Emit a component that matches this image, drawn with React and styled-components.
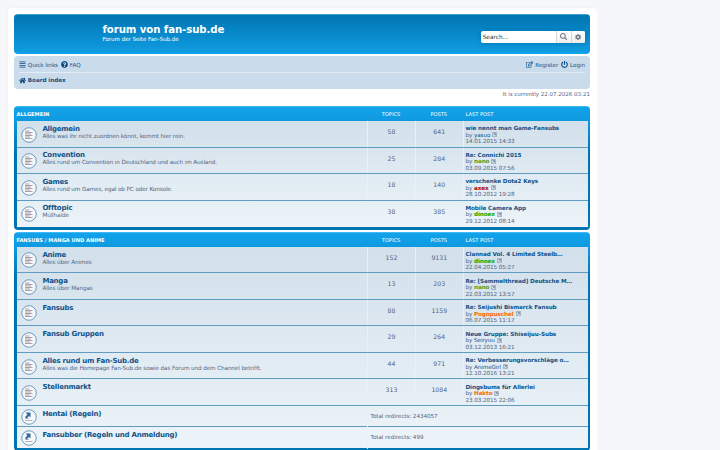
import React from "react";
import styled, { createGlobalStyle } from "styled-components";
import { FaHome, FaSearch, FaCog, FaAlignJustify, FaQuestionCircle, FaPowerOff, FaRegEdit } from "react-icons/fa";

const Global = createGlobalStyle`
  * { box-sizing: border-box; }
  html, body { margin: 0; background: #f5f7fa; }
  body { height: 450px; overflow: hidden; font-family: "DejaVu Sans", sans-serif; color: #536482; }
  h1, h2, p { margin: 0; }
`;
const Wrap = styled.main`
  width: 590px; height: 460px; margin: 7px 0 0 7px; padding: 6px 7px 0 6px;
  background: #fff; border: 1px solid #f0f3f7; border-width: 1px 0 0 1px; border-radius: 4px;
`;
const Banner = styled.header`
  height: 40px; border-radius: 4px; display: flex; justify-content: space-between;
  background: linear-gradient(#6aceff 0, #0076b1 1px, #0f9ae0 92%, #12a3eb 100%);
  color: #fff; padding: 0 5px 0 88.5px;
`;
const SiteTitle = styled.h1`font-size: 10.2px; letter-spacing: -.1px; line-height: 12px; margin-top: 10.4px; white-space: nowrap;`;
const Tagline = styled.p`font-size: 5.6px; letter-spacing: -.06px; line-height: 6.6px; white-space: nowrap;`;
const Search = styled.form`
  display: flex; width: 104px; height: 12px; margin-top: 17px; border-radius: 2px; overflow: hidden;
  background: #fff; box-shadow: 0 0 5px #0075b0;
`;
const SearchText = styled.div`flex: 1; padding-left: 1.7px; font-size: 5.8px; line-height: 13px; color: #333;`;
const SearchButton = styled.button`
  width: 14.5px; padding: 0; border: 0; border-left: 1px solid #d5d7da; background: linear-gradient(#fff, #eceeee);
  display: flex; align-items: center; justify-content: center; color: #707b85; font-size: ${(p) => p.$size}px;
`;
const Nav = styled.nav`margin-top: 2px; height: 33px; background: #cadceb; border-radius: 4px; padding: 0 5px;`;
const NavRow = styled.div`
  height: ${(p) => p.$h}px; display: flex; align-items: center; gap: 3px; color: #105289; font-size: 5.65px; letter-spacing: -.04px;
  padding-top: ${(p) => (p.$line ? 1 : 0)}px;
  border-bottom: ${(p) => (p.$line ? "1px solid #e4edf5" : "0")};
`;
const NavLink = styled.a`
  display: flex; align-items: center; gap: 1.8px; white-space: nowrap; font-weight: ${(p) => (p.$bold ? 700 : 400)};
  margin-left: ${(p) => (p.$right ? "auto" : 0)};
  span { position: relative; top: 0; }
  svg { font-size: 7px; color: #0b4a80; }
`;
const Clock = styled.p`margin-top: 2px; height: 15.2px; font-size: 5.52px; line-height: 7px; text-align: right;`;
const Block = styled.section`
  border-radius: 4px; margin-bottom: 2.5px; padding: 0 2.5px 2.5px;
  background: linear-gradient(#6aceff 0, #12a3eb 1px, #0f9ae0 14px, #0076b1 45px, #0076b1 100%);
`;
const Line = styled.div`display: grid; grid-template-columns: 1fr 48px 47.5px 125px;`;
const Head = styled(Line)`
  height: 14.8px; line-height: 17px; font-size: 5.1px; color: #fff; text-align: center;
`;
const HeadName = styled.h2`font-size: 5.1px; line-height: 17px; text-align: left; text-transform: uppercase;`;
const HeadLast = styled.span`text-align: left; padding-left: 3px;`;
const Rows = styled.div`background: linear-gradient(#d2e0eb, #edf4f9);`;
const Row = styled(Line)`
  height: ${(p) => (p.$link ? 21.15 : 26.52)}px;
  border-bottom: 1px solid #5f9cbf;
  &:last-child { border-bottom: 0; }
  grid-template-columns: ${(p) => (p.$link ? "1fr 220.5px" : "1fr 48px 47.5px 125px")};
`;
const Info = styled.div`display: flex; padding-left: 4.8px;`;
const Badge = styled.svg`width: 16px; height: 16px; flex: none; margin: ${(p) => (p.$link ? 2.9 : 5.6)}px 5.1px 0 0;`;
const ForumName = styled.div`
  font-size: 7px; letter-spacing: -.23px; line-height: 8px; margin-top: 3.7px; font-weight: 700; color: #105289; white-space: nowrap;
`;
const Desc = styled.p`font-size: 5.7px; letter-spacing: -.12px; line-height: 6.5px; white-space: nowrap;`;
const Count = styled.div`border-left: 1px solid #e9f0f6; text-align: center; font-size: 6.2px; line-height: 21.5px;`;
const Last = styled.div`border-left: 1px solid #e9f0f6; padding: 4.2px 0 0 2px; font-size: 5.65px; letter-spacing: -.08px; line-height: 6.6px; white-space: nowrap;`;
const Subject = styled.div`font-weight: 700; color: #105289;`;
const User = styled.span`color: ${(p) => p.$color || "#105289"}; font-weight: ${(p) => (p.$color ? 700 : 400)};`;
const Redirects = styled.div`border-left: 1px solid #e9f0f6; padding-left: 2.5px; font-size: 5.6px; letter-spacing: -.04px; line-height: 21.5px;`;
const Jump = styled.svg`width: 5px; height: 5px; margin-left: 2px; vertical-align: -.6px;`;

const ForumBadge = ({ link }) => (
  <Badge $link={link} viewBox="0 0 32 32">
    <circle cx="16" cy="16" r="14.5" fill="#f7fafc" stroke="#5b91b5" strokeWidth="1.8" />
    {link ? (
      <>
        <path d="M8 19h8m-8 4h15" stroke="#aaa1a9" strokeWidth="1.6" />
        <path d="M9 7h10v10l-3-3-5 5-3-3 5-5z" fill="#2c6795" />
      </>
    ) : (
      <path d="M8 8h9M8 11h15M8 14h12M8 17h15M8 20h10M8 23h15" stroke="#a89ba4" strokeWidth="1.9" />
    )}
  </Badge>
);
const JumpIcon = () => (
  <Jump viewBox="0 0 10 10">
    <rect x=".7" y=".7" width="8.6" height="8.6" rx="1.5" fill="#dbe6ee" stroke="#8194a8" strokeWidth="1.4" />
    <path d="M3 3h4v4M7 3 3 7" fill="none" stroke="#71869d" strokeWidth="1.5" />
  </Jump>
);

const green = "#00aa00", olive = "#529b22", orange = "#ff6600", red = "#aa0000";
const groups = [
  { name: "Allgemein", forums: [
    ["Allgemein", "Alles was ihr nicht zuordnen könnt, kommt hier rein.", 58, 641, "wie nennt man Game-Fansubs", "yasuo", null, "14.01.2015 14:33"],
    ["Convention", "Alles rund um Convention in Deutschland und auch im Ausland.", 25, 284, "Re: Connichi 2015", "nano", olive, "03.09.2015 07:56"],
    ["Games", "Alles rund um Games, egal ob PC oder Konsole.", 18, 140, "verschenke Dota2 Keys", "axex", red, "28.10.2012 19:28"],
    ["Offtopic", "Müllhalde", 38, 385, "Mobile Camera App", "dinoex", green, "29.12.2012 08:14"],
  ] },
  { name: "Fansubs / Manga und Anime", forums: [
    ["Anime", "Alles über Animes", 152, 9131, "Clannad Vol. 4 Limited Steelb…", "dinoex", green, "22.04.2015 05:27"],
    ["Manga", "Alles über Mangas", 13, 203, "Re: [Sammelthread] Deutsche M…", "nano", olive, "22.03.2012 13:57"],
    ["Fansubs", "", 88, 1159, "Re: Seijushi Bismarck Fansub", "Pogopuschel", orange, "06.07.2015 11:17"],
    ["Fansub Gruppen", "", 29, 264, "Neue Gruppe: Shiseijuu-Subs", "Seiryuu", null, "03.12.2013 16:21"],
    ["Alles rund um Fan-Sub.de", "Alles was die Homepage Fan-Sub.de sowie das Forum und dem Channel betrifft.", 44, 971, "Re: Verbesserungsvorschläge o…", "AnimeGirl", null, "12.10.2016 13:21"],
    ["Stellenmarkt", "", 313, 1084, "Dingsbums für Allerlei", "Hakto", orange, "23.03.2015 22:06"],
  ], links: [["Hentai (Regeln)", 2434057], ["Fansubber (Regeln und Anmeldung)", 499]] },
];

const ForumRow = ({ data: [name, desc, topics, posts, subject, user, color, date] }) => (
  <Row>
    <Info><ForumBadge /><div><ForumName>{name}</ForumName><Desc>{desc}</Desc></div></Info>
    <Count>{topics}</Count>
    <Count>{posts}</Count>
    <Last>
      <Subject>{subject}</Subject>
      <div>by <User $color={color}>{user}</User><JumpIcon /></div>
      <div>{date}</div>
    </Last>
  </Row>
);

export default function App() {
  return (
    <>
      <Global />
      <Wrap>
        <Banner>
          <div><SiteTitle>forum von fan-sub.de</SiteTitle><Tagline>Forum der Seite Fan-Sub.de</Tagline></div>
          <Search>
            <SearchText>Search…</SearchText>
            <SearchButton type="button" $size={7.2}><FaSearch /></SearchButton>
            <SearchButton type="button" $size={6.2}><FaCog /></SearchButton>
          </Search>
        </Banner>
        <Nav>
          <NavRow $h={17} $line>
            <NavLink><FaAlignJustify /><span>Quick links</span></NavLink>
            <NavLink><FaQuestionCircle /><span>FAQ</span></NavLink>
            <NavLink $right><FaRegEdit /><span>Register</span></NavLink>
            <NavLink><FaPowerOff /><span>Login</span></NavLink>
          </NavRow>
          <NavRow $h={14}><NavLink $bold><FaHome /><span>Board index</span></NavLink></NavRow>
        </Nav>
        <Clock>It is currently 22.07.2026 03:21</Clock>
        {groups.map((g) => (
          <Block key={g.name}>
            <Head><HeadName>{g.name}</HeadName><span>TOPICS</span><span>POSTS</span><HeadLast>LAST POST</HeadLast></Head>
            <Rows>
              {g.forums.map((f) => <ForumRow key={f[0]} data={f} />)}
              {(g.links || []).map(([name, hits]) => (
                <Row key={name} $link>
                  <Info><ForumBadge link /><ForumName>{name}</ForumName></Info>
                  <Redirects>Total redirects: {hits}</Redirects>
                </Row>
              ))}
            </Rows>
          </Block>
        ))}
      </Wrap>
    </>
  );
}
